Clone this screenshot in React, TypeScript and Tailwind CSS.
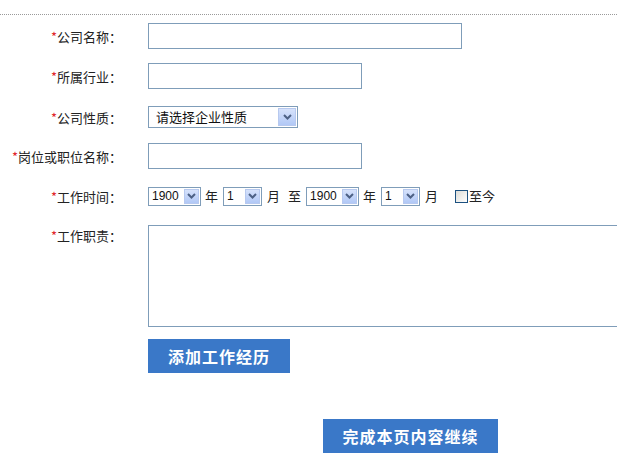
import React from 'react';

const cjk = { fontFamily: '"Noto Sans CJK SC", "Liberation Sans", sans-serif' };

function Label({ text }: { text: string }) {
    return (
        <div className="w-[122px] shrink-0 text-right text-[13px] text-[#222] leading-none" style={cjk}>
            <span className="text-[#e0262c]">*</span>
            {text}
        </div>
    );
}

function Arrow({ size }: { size: number }) {
    return (
        <div
            className="flex items-center justify-center bg-gradient-to-b from-[#d6e2fb] to-[#b1c8f6] border border-[#b7c9ef]"
            style={{ width: size, height: size }}
        >
            <svg width="9" height="6" viewBox="0 0 9 6">
                <path d="M1 1 L4.5 4.5 L8 1" stroke="#4d6185" strokeWidth="2" fill="none" />
            </svg>
        </div>
    );
}

function FakeSelect({ value, width, height, cn }: { value: string; width: number; height: number; cn?: boolean }) {
    return (
        <div
            className="flex items-center justify-between bg-white border border-[#7f9db9] pl-[3px] pr-[1px] shrink-0"
            style={{ width, height }}
        >
            <span
                className={cn ? 'text-[13px] text-[#111] pl-[4px]' : 'text-[12px] text-[#111]'}
                style={cn ? cjk : { fontFamily: '"Liberation Sans", Arial, sans-serif' }}
            >
                {value}
            </span>
            <Arrow size={height - 4} />
        </div>
    );
}

export default function App() {
    return (
        <div className="w-[617px] h-[463px] bg-white overflow-hidden" style={cjk}>
            <div className="h-[14px]"></div>
            <div className="border-t border-dotted border-[#9a9a9a]"></div>

            <div className="flex flex-col">
                {/* 公司名称 */}
                <div className="flex items-center h-10 mt-[1px]">
                    <Label text="公司名称：" />
                    <input className="ml-[26px] w-[314px] h-[26px] border border-[#7f9db9] outline-none" />
                </div>

                {/* 所属行业 */}
                <div className="flex items-center h-10">
                    <Label text="所属行业：" />
                    <input className="ml-[26px] w-[214px] h-[26px] border border-[#7f9db9] outline-none" />
                </div>

                {/* 公司性质 */}
                <div className="flex items-center h-10 pt-[2px]">
                    <Label text="公司性质：" />
                    <div className="ml-[26px]">
                        <FakeSelect value="请选择企业性质" width={150} height={22} cn />
                    </div>
                </div>

                {/* 岗位或职位名称 */}
                <div className="flex items-center h-10">
                    <Label text="岗位或职位名称：" />
                    <input className="ml-[26px] w-[214px] h-[26px] border border-[#7f9db9] outline-none" />
                </div>

                {/* 工作时间 */}
                <div className="flex items-center h-10 text-[13px] text-[#222]">
                    <Label text="工作时间：" />
                    <div className="ml-[26px] flex items-center">
                        <FakeSelect value="1900" width={53} height={19} />
                        <span className="ml-[4px]">年</span>
                        <span className="ml-[5px]"><FakeSelect value="1" width={39} height={19} /></span>
                        <span className="ml-[5px]">月</span>
                        <span className="ml-[8px]">至</span>
                        <span className="ml-[5px]"><FakeSelect value="1900" width={53} height={19} /></span>
                        <span className="ml-[4px]">年</span>
                        <span className="ml-[5px]"><FakeSelect value="1" width={39} height={19} /></span>
                        <span className="ml-[5px]">月</span>
                        <label className="ml-[17px] flex items-center">
                            <span className="w-[13px] h-[13px] border border-[#1c5180] bg-gradient-to-br from-[#dcdcd7] to-white"></span>
                            <span className="ml-[1px]">至今</span>
                        </label>
                    </div>
                </div>

                {/* 工作职责 */}
                <div className="flex items-start mt-[9px]">
                    <div className="pt-[4px]">
                        <Label text="工作职责：" />
                    </div>
                    <textarea className="ml-[26px] w-[480px] h-[102px] shrink-0 border border-[#7f9db9] outline-none resize-none" />
                </div>

                <div className="pl-[148px] mt-[12px]">
                    <button className="w-[142px] h-[34px] bg-[#3a78c8] text-white text-[16px] font-bold tracking-[1px]">
                        添加工作经历
                    </button>
                </div>

                <div className="pl-[323px] mt-[46px]">
                    <button className="w-[175px] h-[34px] bg-[#3a78c8] text-white text-[16px] font-bold tracking-[1px]">
                        完成本页内容继续
                    </button>
                </div>
            </div>
        </div>
    );
}
